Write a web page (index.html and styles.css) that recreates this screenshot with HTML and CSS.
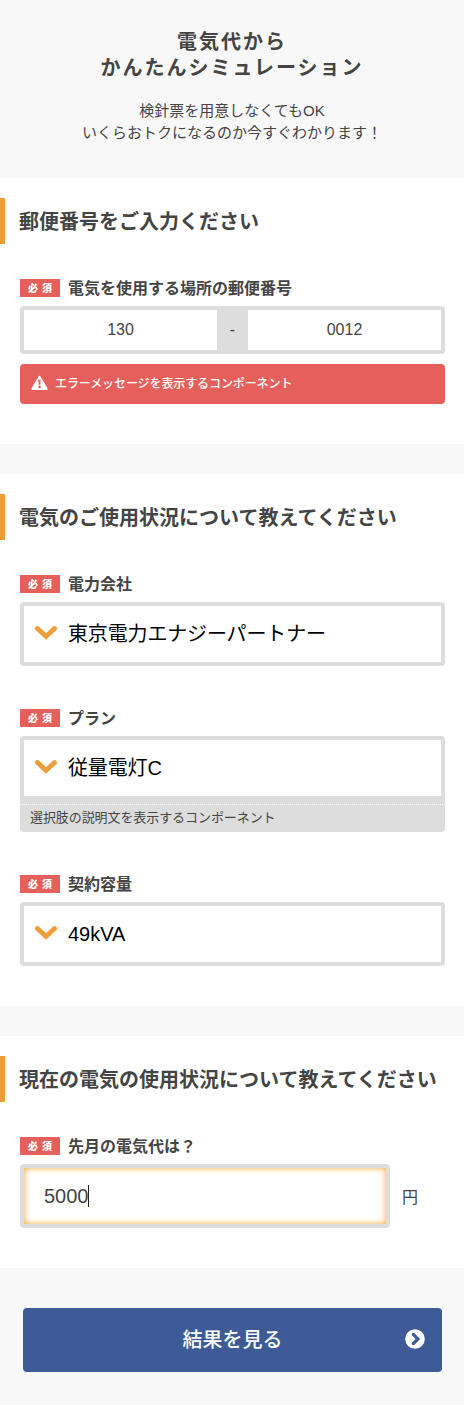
FILE: index.html
```html
<!DOCTYPE html>
<html lang="ja">
<head>
<meta charset="utf-8">
<title>電気代からかんたんシミュレーション</title>
<link rel="stylesheet" href="styles.css">
</head>
<body>
<header class="hero">
  <h1 class="hero-title">電気代から<br>かんたんシミュレーション</h1>
  <p class="hero-text">検針票を用意しなくてもOK<br>いくらおトクになるのか今すぐわかります！</p>
</header>
<main class="sections">
  <section class="section">
    <h2 class="heading">郵便番号をご入力ください</h2>
    <div class="fields">
      <div class="field">
        <div class="label"><span class="badge">必須</span><span class="label-text">電気を使用する場所の郵便番号</span></div>
        <div class="zip">
          <div class="zip-input">130</div>
          <span class="zip-dash">-</span>
          <div class="zip-input">0012</div>
        </div>
        <div class="error">
          <svg class="error-icon" viewBox="0 0 18 16"><path d="M9 1.6 16.4 14.2H1.6Z" fill="#fff" stroke="#fff" stroke-width="2.4" stroke-linejoin="round"/><path d="M7.7 4.6h2.6l-.4 5.2H8.1z" fill="#e6605b"/><circle cx="9" cy="12.1" r="1.4" fill="#e6605b"/></svg>
          <span>エラーメッセージを表示するコンポーネント</span>
        </div>
      </div>
    </div>
  </section>
  <section class="section">
    <h2 class="heading">電気のご使用状況について教えてください</h2>
    <div class="fields">
      <div class="field">
        <div class="label"><span class="badge">必須</span><span class="label-text">電力会社</span></div>
        <div class="select">
          <svg class="chevron" viewBox="0 0 22 14"><path d="M2.5 2.5 11 10.4 19.5 2.5"/></svg>
          <span class="select-value">東京電力エナジーパートナー</span>
        </div>
      </div>
      <div class="field">
        <div class="label"><span class="badge">必須</span><span class="label-text">プラン</span></div>
        <div class="select select-noted">
          <svg class="chevron" viewBox="0 0 22 14"><path d="M2.5 2.5 11 10.4 19.5 2.5"/></svg>
          <span class="select-value">従量電灯C</span>
        </div>
        <div class="note">選択肢の説明文を表示するコンポーネント</div>
      </div>
      <div class="field">
        <div class="label"><span class="badge">必須</span><span class="label-text">契約容量</span></div>
        <div class="select">
          <svg class="chevron" viewBox="0 0 22 14"><path d="M2.5 2.5 11 10.4 19.5 2.5"/></svg>
          <span class="select-latin">49kVA</span>
        </div>
      </div>
    </div>
  </section>
  <section class="section">
    <h2 class="heading">現在の電気の使用状況について教えてください</h2>
    <div class="fields">
      <div class="field">
        <div class="label"><span class="badge">必須</span><span class="label-text">先月の電気代は？</span></div>
        <div class="amount">
          <div class="amount-input">5000<span class="caret"></span></div>
          <span class="unit">円</span>
        </div>
      </div>
    </div>
  </section>
</main>
<footer class="footer">
  <div class="submit" role="button">
    <span class="submit-text">結果を見る</span>
    <svg class="submit-icon" viewBox="0 0 20 20"><circle cx="10" cy="10" r="9.8" fill="#fff"/><path d="M8.3 5.4 12.9 10l-4.6 4.6" fill="none" stroke="#3d5b97" stroke-width="3.2" stroke-linecap="round" stroke-linejoin="miter"/></svg>
  </div>
</footer>
</body>
</html>
```

FILE: styles.css
```css
* { box-sizing: border-box; }
body {
  margin: 0;
  background: #f8f8f8;
  color: #444;
  font-family: "Liberation Sans", "Noto Sans CJK JP", sans-serif;
}
h1, h2, p { margin: 0; }
svg { display: block; flex: none; }

.hero {
  height: 178px;
  padding-top: 29px;
  text-align: center;
}
.hero-title {
  font-size: 20px;
  line-height: 26px;
  letter-spacing: 2px;
}
.hero-text {
  margin-top: 19px;
  font-size: 15px;
  line-height: 22px;
}

.sections {
  display: flex;
  flex-direction: column;
  gap: 30px;
}
.section {
  padding: 20px 0 40px;
  background: #fff;
}
.heading {
  height: 46px;
  padding-left: 14px;
  border-left: 5px solid #ee9e38;
  font-size: 20px;
  line-height: 48px;
  white-space: nowrap;
}
.fields {
  display: flex;
  flex-direction: column;
  gap: 40px;
  margin-top: 32px;
  padding: 0 19px 0 20px;
}
.label {
  display: flex;
  align-items: center;
  gap: 8px;
  height: 24px;
  margin-bottom: 6px;
  font-size: 16px;
  font-weight: bold;
}
.label-text { padding-bottom: 2px; }
.badge {
  width: 40px;
  height: 18px;
  padding-left: 8px;
  background: #e6605b;
  color: #fff;
  font-size: 10px;
  font-weight: 900;
  line-height: 20px;
  letter-spacing: 4px;
  white-space: nowrap;
}

.zip {
  display: grid;
  grid-template-columns: 1fr 31px 1fr;
  height: 48px;
  border: 4px solid #ddd;
  border-radius: 4px;
  background: #ddd;
  font-size: 16px;
  line-height: 40px;
  text-align: center;
}
.zip-input { background: #fff; }
.error {
  display: flex;
  align-items: center;
  gap: 7px;
  height: 40px;
  margin-top: 10px;
  padding: 0 0 3px 11px;
  border-radius: 4px;
  background: #e6605b;
  color: #fff;
  font-size: 12px;
  font-weight: 500;
  letter-spacing: -0.1px;
}
.error-icon { width: 17px; height: 16px; }

.select {
  display: flex;
  align-items: center;
  gap: 11px;
  height: 64px;
  padding-left: 11px;
  border: 4px solid #ddd;
  border-radius: 4px;
  background: #fff;
  color: #000;
  font-size: 20px;
}
.select-noted { border-radius: 4px 4px 0 0; }
.select-value {
  padding-bottom: 3px;
  letter-spacing: -0.15px;
}
.chevron {
  width: 22px;
  height: 14px;
  margin-bottom: 2px;
  fill: none;
  stroke: #ee9e38;
  stroke-width: 4.8;
  stroke-linecap: round;
}
.note {
  height: 32px;
  padding: 4px 10px 0;
  border-radius: 0 0 4px 4px;
  background: repeating-linear-gradient(90deg, #fff 0 1px, #ddd 1px 2px) 0 4px / 100% 1px no-repeat #ddd;
  font-size: 13px;
  line-height: 28px;
  letter-spacing: -0.08px;
}

.amount {
  display: flex;
  align-items: center;
  gap: 12px;
}
.amount-input {
  display: flex;
  align-items: center;
  width: 370px;
  height: 64px;
  padding-left: 20px;
  border: 4px solid #ddd;
  border-radius: 4px;
  background: #fff;
  box-shadow: inset 0 0 6px #f5a623;
  font-size: 20px;
}
.caret {
  width: 1px;
  height: 22px;
  margin-left: -1px;
  background: #222;
}
.unit { font-size: 16px; }

.footer { padding: 40px 22px 33px 23px; }
.submit {
  display: grid;
  grid-template-columns: 20px 1fr 20px;
  align-items: center;
  height: 64px;
  padding: 0 17px 2px;
  border-radius: 4px;
  background: #3d5b97;
  color: #fff;
  font-size: 20px;
  font-weight: 500;
  text-align: center;
}
.submit-text {
  grid-column: 2;
  padding-bottom: 1px;
}
.submit-icon { width: 20px; height: 20px; }
```
